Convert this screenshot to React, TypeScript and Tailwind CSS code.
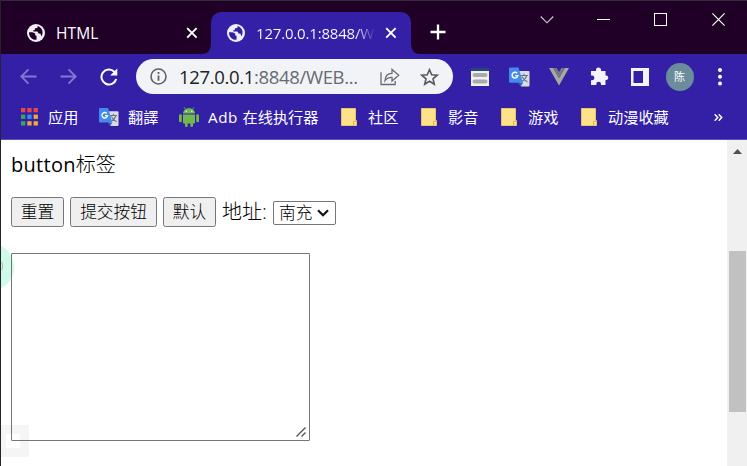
import React from "react";

const UI = "font-['Open_Sans','Noto_Sans_CJK_SC',sans-serif]";

function Globe() {
  return (
    <svg width="18" height="18" viewBox="0 0 18 18" className="shrink-0">
      <circle cx="9" cy="9" r="9" fill="#f1eff7" />
      <path d="M2 8.2 L5.5 8.3 L8.2 9.6 L8.2 11.4 L9.6 11.7 L9.5 15.8 C5 16.2 1.8 12.5 2 8.2Z" fill="currentColor" />
      <path d="M10.6 2 L10.4 3.9 L8 4.2 L7.8 6 L6.2 6.3 L6.4 7.5 L10.4 7.4 L11.6 9.5 L13.6 9.7 L14.2 12.6 C16.8 9.4 16 3.8 10.6 2Z" fill="currentColor" />
    </svg>
  );
}

function Close() {
  return (
    <svg width="12" height="12" viewBox="0 0 12 12" className="shrink-0">
      <path d="M1.2 1.2 L10.6 10.6 M10.6 1.2 L1.2 10.6" stroke="#fff" strokeWidth="1.9" />
    </svg>
  );
}

function Translate() {
  return (
    <svg width="21" height="20" viewBox="0 0 21 20">
      <path d="M8 4H19.5Q20.5 4 20.5 5V18.5Q20.5 19.5 19.5 19.5H12Z" fill="#d9dde2" />
      <path d="M11 8.5H19M15 6.7V8.5M17.7 8.5Q16.5 12.5 12 15M13 9.5Q14.5 13 18.5 15" stroke="#60788a" strokeWidth="1.1" fill="none" />
      <path d="M9 15.8H14L11.8 19.5Z" fill="#3367b0" />
      <path d="M1 0.5H9.5L14 15.8H1Q0 15.8 0 14.8V1.5Q0 .5 1 .5Z" fill="#4589ed" />
      <path d="M8.2 6.2A2.9 2.9 0 1 0 8.9 8.6H6.2" stroke="#fff" strokeWidth="1.4" fill="none" />
    </svg>
  );
}

function Apps() {
  return (
    <svg width="17" height="18" viewBox="0 0 17 18">
      {["#ed4545", "#ed4545", "#ed4545", "#35a764", "#348df0", "#edaa39", "#35a764", "#edaa39", "#edaa39"].map((c, i) => (
        <rect key={i} x={(i % 3) * 6.3} y={Math.floor(i / 3) * 6.6} width="4.3" height="4.3" fill={c} />
      ))}
    </svg>
  );
}

function Android() {
  return (
    <svg width="20" height="20" viewBox="0 0 20 20">
      <path d="M6.5 2.2L5 .2M13.5 2.2L15 .2" stroke="#77b657" strokeWidth=".8" />
      <path d="M4 6.5C4.2 3 7 1.3 10 1.3S15.8 3 16 6.5Z" fill="#70b94c" />
      <path d="M4 7.5H16V15.6Q16 16.5 15 16.5H14V19Q14 20 12.7 20T11.4 19V16.5H8.6V19Q8.6 20 7.3 20T6 19V16.5H5Q4 16.5 4 15.6Z" fill="#70b94c" />
      <rect x="0" y="7.3" width="2.8" height="8" rx="1.3" fill="#70b94c" />
      <rect x="17.2" y="7.3" width="2.8" height="8" rx="1.3" fill="#70b94c" />
      <circle cx="7.2" cy="4.2" r=".7" fill="#fff" />
      <circle cx="12.8" cy="4.2" r=".7" fill="#fff" />
    </svg>
  );
}

function Folder() {
  return (
    <svg width="16" height="18" viewBox="0 0 16 18">
      <path d="M.5 .5H14.5V12.5H15.5V17.5H.5Z" fill="#fee28b" stroke="#e9c45e" />
      <path d="M12.5 17.5V13.5H15.5" stroke="#e0b54b" fill="none" />
    </svg>
  );
}

function Bookmark({ icon, text, width }: { icon: React.ReactNode; text: React.ReactNode; width: string }) {
  return (
    <div className={`flex h-full shrink-0 items-center ${width}`}>
      <div className="mr-[9px] flex w-5 shrink-0 justify-center">{icon}</div>
      <span>{text}</span>
    </div>
  );
}

function Cell({ children }: { children: React.ReactNode }) {
  return <div className="flex h-full w-10 shrink-0 items-center justify-center">{children}</div>;
}

function TabStrip() {
  return (
    <header className="flex h-[54px] shrink-0 border-t border-[#352a38] bg-[#210028] text-white">
      <div className="flex h-full w-[200px] shrink-0 items-center pt-[11px] pb-0">
        <div className="mb-[1px] ml-[26px] flex w-[174px] items-center text-[#210028]">
          <Globe />
          <span className="ml-[11px] w-[130px] text-[15.5px] leading-5 tracking-[0.1px] text-white">HTML</span>
          <Close />
        </div>
      </div>
      <div className="relative mt-[11px] ml-[10px] flex w-[200px] shrink-0 items-center rounded-t-[10px] bg-[#3420a7] pl-4 text-[#3420a7]">
        <svg className="absolute bottom-0 -left-[10px]" width="10" height="10"><path d="M10 0V10H0Q10 10 10 0" fill="#3420a7" /></svg>
        <svg className="absolute -right-[10px] bottom-0" width="10" height="10"><path d="M0 0V10H10Q0 10 0 0" fill="#3420a7" /></svg>
        <Globe />
        <span className="mr-[10px] ml-[11px] w-[119px] bg-linear-to-r from-white from-[84%] to-transparent bg-clip-text text-[15px] leading-5 tracking-[-0.18px] whitespace-nowrap text-transparent">127.0.0.1:8848/W</span>
        <Close />
      </div>
      <svg className="mt-[23px] ml-[19px] shrink-0" width="16" height="16"><path d="M8 .5V15.5M.5 8H15.5" stroke="#fff" strokeWidth="2.3" /></svg>
      <svg className="mt-3 ml-[94px] shrink-0" width="14" height="14"><path d="M.7 3.5L7 9.8L13.3 3.5" stroke="#d5cbd8" strokeWidth="1.1" fill="none" /></svg>
      <svg className="mt-3 ml-[43px] shrink-0" width="13" height="14"><path d="M0 6.5H13" stroke="#fff" /></svg>
      <svg className="mt-3 ml-[44px] shrink-0" width="13" height="14"><rect x=".5" y=".5" width="12" height="12" stroke="#fff" fill="none" /></svg>
      <svg className="mt-3 ml-[45px] shrink-0" width="13" height="14"><path d="M.4 .4L12.6 12.6M12.6 .4L.4 12.6" stroke="#fff" strokeWidth="1.15" /></svg>
    </header>
  );
}

function Toolbar() {
  return (
    <div className="flex h-[45px] shrink-0 items-center bg-[#3420a7] pl-2">
      <Cell><svg width="17" height="18" viewBox="0 0 17 18" className="mr-px"><path d="M16.5 8.5H1.5M8.5 1.3L1.3 8.5L8.5 15.7" stroke="#8377d0" strokeWidth="1.8" fill="none" /></svg></Cell>
      <Cell><svg width="17" height="18" viewBox="0 0 17 18" className="mr-px"><path d="M.5 8.5H15.5M8.5 1.3L15.7 8.5L8.5 15.7" stroke="#8377d0" strokeWidth="1.8" fill="none" /></svg></Cell>
      <Cell><svg width="18" height="18" viewBox="0 0 18 18"><path d="M16.2 11A7.5 7.5 0 1 1 14.3 3.7L16 5.5" stroke="#fff" strokeWidth="2" fill="none" /><path d="M17.3 .5V7.5H10.2Z" fill="#fff" /></svg></Cell>
      <div className="mr-[6px] ml-[7px] flex h-[35px] w-[317px] shrink-0 items-center rounded-full bg-[#f1f3f6] pl-[14px]">
        <svg width="17" height="17" viewBox="0 0 17 17" className="shrink-0"><circle cx="8.5" cy="8.5" r="7.5" fill="none" stroke="#5f6368" strokeWidth="1.6" /><path d="M8.5 7.4V12.8M8.5 4.1V6" stroke="#5f6368" strokeWidth="1.8" /></svg>
        <span className="ml-3 w-[201px] shrink-0 text-[18.5px] leading-6 tracking-[-0.34px] whitespace-nowrap text-[#686b70]"><span className="text-[#202124]">127.0.0.1</span>:8848/WEB...</span>
        <svg width="20" height="18" viewBox="0 0 20 18" className="shrink-0"><path d="M1 4.2V16.5H15.2V13M5 12.7Q5.2 5.5 12 5.3V1.4L18.7 7.3L12 13V9.3Q7.5 9 5 12.7Z" stroke="#686c71" strokeWidth="1.3" fill="none" /></svg>
        <svg width="19" height="18" viewBox="0 0 19 18" className="ml-5 shrink-0"><path d="M9.5 1.7L11.7 6.8L17.2 7.2L13 10.8L14.3 16.2L9.5 13.3L4.7 16.2L6 10.8L1.8 7.2L7.3 6.8Z" stroke="#55595e" strokeWidth="1.6" fill="none" /></svg>
      </div>
      <Cell><svg width="18" height="18" viewBox="0 0 18 18" className="ml-px"><rect width="18" height="18" fill="#f2f2f4" /><rect width="18" height="3" fill="#284878" /><rect x="1.5" y="5" width="15" height="4" rx="2" fill="#aaa9ad" /><rect x="1.5" y="11.5" width="15" height="4" rx="2" fill="#aaa9ad" /></svg></Cell>
      <Cell><Translate /></Cell>
      <Cell><svg width="20" height="18" viewBox="0 0 20 18"><path d="M0 0H4.2L10 10L15.8 0H20L10 17.5Z" fill="#aaa79e" /><path d="M4.2 0H7.7L10 4L12.3 0H15.8L10 10Z" fill="#777985" /></svg></Cell>
      <Cell><svg width="19" height="19" viewBox="0 0 19 19" className="ml-px"><path d="M1 4H6V3A2.5 2.5 0 0 1 11 3V4H15.5V8.5H16.5A2.3 2.3 0 0 1 16.5 13H15.5V18H11V17A2.3 2.3 0 0 0 6.3 17V18H1V13.3H2A2.3 2.3 0 0 0 2 8.5H1Z" fill="#f4f2fc" /></svg></Cell>
      <Cell><svg width="18" height="18" viewBox="0 0 18 18" className="ml-[2px]"><path fillRule="evenodd" d="M0 0H18V18H0ZM2.5 3V15H12V3Z" fill="#f5f3fb" /></svg></Cell>
      <Cell><div className="ml-px flex size-7 shrink-0 items-center justify-center rounded-full bg-[#6b8c9a] text-[11px] leading-none text-white">陈</div></Cell>
      <Cell><svg width="4" height="18" viewBox="0 0 4 18" className="ml-px"><circle cx="2" cy="2" r="2" fill="#fff" /><circle cx="2" cy="8.7" r="2" fill="#fff" /><circle cx="2" cy="15.4" r="2" fill="#fff" /></svg></Cell>
    </div>
  );
}

function Bookmarks() {
  return (
    <nav className="flex h-[41px] shrink-0 items-center border-b border-[#604fb9] bg-[#3420a7] pb-1 pl-[18px] text-[15.2px] leading-5 whitespace-nowrap text-white">
      <Bookmark icon={<Apps />} text="应用" width="w-20" />
      <Bookmark icon={<Translate />} text="翻譯" width="w-20" />
      <Bookmark icon={<Android />} text={<><span className="tracking-[0.6px]">Adb </span>在线执行器</>} width="w-40" />
      <Bookmark icon={<Folder />} text="社区" width="w-20" />
      <Bookmark icon={<Folder />} text="影音" width="w-20" />
      <Bookmark icon={<Folder />} text="游戏" width="w-20" />
      <Bookmark icon={<Folder />} text="动漫收藏" width="w-[135px]" />
      <svg width="9" height="7" viewBox="0 0 9 7"><path d="M.7 .3L3.7 3.5L.7 6.7M4.7 .3L7.7 3.5L4.7 6.7" stroke="#fff" strokeWidth="1.5" fill="none" /></svg>
    </nav>
  );
}

function PageButton({ children, width }: { children: React.ReactNode; width: string }) {
  return <button className={`mr-[6px] h-[30px] shrink-0 rounded-[2.5px] border border-[#767676] bg-[#efefef] text-center text-[16.7px] leading-7 font-light whitespace-nowrap ${width}`}>{children}</button>;
}

export default function App() {
  return (
    <div className={`flex h-[466px] w-[747px] flex-col overflow-hidden border-l border-[#262329] bg-white text-black ${UI}`}>
      <TabStrip />
      <Toolbar />
      <Bookmarks />
      <div className="flex min-h-0 flex-1">
        <main className="relative min-w-0 flex-1 pt-[10px] pl-[10px]">
          <div className="absolute top-[103px] -left-[35px] size-12 rounded-full bg-[#cff9e9]" />
          <div className="absolute top-[120px] -left-[8px] h-3 w-[10px] rounded-full border border-[#a9b8b2]" />
          <div className="absolute top-[285px] left-0 h-8 w-7 bg-[#f5f5f5]"><div className="mt-[9px] ml-[5px] size-[14px] bg-white" /></div>
          <p className="h-[30px] text-[20px] leading-[30px] tracking-[0.3px] whitespace-nowrap">button<span className="font-light tracking-normal">标签</span></p>
          <div className="mt-[17px] flex h-[30px] items-center">
            <PageButton width="w-[53px]">重置</PageButton>
            <PageButton width="w-[87px]">提交按钮</PageButton>
            <PageButton width="w-[53px]">默认</PageButton>
            <span className="w-[51px] shrink-0 text-[20px] leading-[30px] font-light whitespace-nowrap">地址:</span>
            <div className="mt-[2px] flex h-6 w-[63px] items-center rounded-[2px] border border-[#767676] bg-white pl-[5px] text-[16.7px] leading-none font-light whitespace-nowrap">
              南充
              <svg className="ml-[5px]" width="12" height="8" viewBox="0 0 12 8"><path d="M1 1.3L6 6.2L11 1.3" stroke="#111" strokeWidth="2.2" fill="none" /></svg>
            </div>
          </div>
          <div className="relative mt-[26px] flex h-[188px] w-[299px] items-end justify-end rounded-[1px] border border-[#767676] p-[3px]">
            <svg width="10" height="10" viewBox="0 0 10 10"><path d="M.5 9.5L9.5 .5M5.5 9.5L9.5 5.5" stroke="#555" strokeWidth="1.4" /></svg>
          </div>
        </main>
        <aside className="flex w-5 shrink-0 flex-col items-center bg-[#f0f0f0] pt-[9px]">
          <svg width="9" height="5" className="ml-px"><path d="M0 5L4.5 0L9 5Z" fill="#505050" /></svg>
          <div className="mt-[97px] ml-px h-[161px] w-[17px] bg-[#c1c1c1]" />
        </aside>
      </div>
    </div>
  );
}
